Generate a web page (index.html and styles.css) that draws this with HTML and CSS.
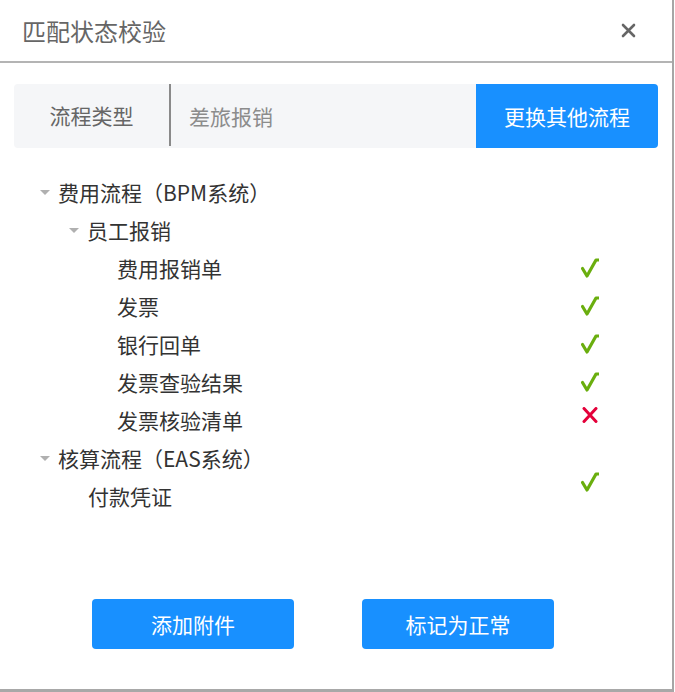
FILE: index.html
```html
<!DOCTYPE html>
<html lang="zh-CN">
<head>
<meta charset="utf-8">
<title>匹配状态校验</title>
<link rel="stylesheet" href="styles.css">
</head>
<body>
<div class="dialog">
  <div class="header">
    <span class="title">匹配状态校验</span>
    <span class="close" aria-label="关闭">
      <svg width="15" height="15" viewBox="0 0 15 15"><path d="M2 2 L13 13 M13 2 L2 13" stroke="#666" stroke-width="2.6" stroke-linecap="round"/></svg>
    </span>
  </div>
  <div class="body">
    <div class="segment">
      <div class="seg-label">流程类型</div>
      <div class="seg-value">差旅报销</div>
      <div class="seg-btn">更换其他流程</div>
    </div>
    <div class="tree">
      <div class="row l1"><span class="arrow"></span><span class="txt">费用流程（BPM系统）</span></div>
      <div class="row l2"><span class="arrow"></span><span class="txt">员工报销</span></div>
      <div class="row l3"><span class="arrow none"></span><span class="txt">费用报销单</span><span class="status"><svg class="ok" width="18" height="20" viewBox="0 0 18 20"><path d="M1.5 10.5 L6 18 L15 2 L17.5 2" /></svg></span></div>
      <div class="row l3"><span class="arrow none"></span><span class="txt">发票</span><span class="status"><svg class="ok" width="18" height="20" viewBox="0 0 18 20"><path d="M1.5 10.5 L6 18 L15 2 L17.5 2" /></svg></span></div>
      <div class="row l3"><span class="arrow none"></span><span class="txt">银行回单</span><span class="status"><svg class="ok" width="18" height="20" viewBox="0 0 18 20"><path d="M1.5 10.5 L6 18 L15 2 L17.5 2" /></svg></span></div>
      <div class="row l3"><span class="arrow none"></span><span class="txt">发票查验结果</span><span class="status"><svg class="ok" width="18" height="20" viewBox="0 0 18 20"><path d="M1.5 10.5 L6 18 L15 2 L17.5 2" /></svg></span></div>
      <div class="row l3"><span class="arrow none"></span><span class="txt">发票核验清单</span><span class="status up"><svg class="bad" width="18" height="16" viewBox="0 0 18 16"><path d="M3 1.5 L15 14.5 M15 1.5 L3 14.5" /></svg></span></div>
      <div class="row l1"><span class="arrow"></span><span class="txt">核算流程（EAS系统）</span></div>
      <div class="row l2"><span class="arrow none"></span><span class="txt">付款凭证</span><span class="status up2"><svg class="ok" width="18" height="20" viewBox="0 0 18 20"><path d="M1.5 10.5 L6 18 L15 2 L17.5 2" /></svg></span></div>
    </div>
    <div class="actions">
      <div class="btn btn-a">添加附件</div>
      <div class="btn btn-b">标记为正常</div>
    </div>
  </div>
</div>
</body>
</html>
```

FILE: styles.css
```css
* { box-sizing: border-box; }
html, body { margin: 0; padding: 0; background: #fff; }
body {
  font-family: "Noto Sans CJK SC", "Noto Sans", sans-serif;
  width: 675px;
  height: 692px;
  overflow: hidden;
}
.dialog {
  width: 674px;
  height: 692px;
  border-right: 2px solid #a6a6a6;
  border-bottom: 3px solid #a8a8a8;
  background: #fff;
  display: flex;
  flex-direction: column;
}
.header {
  height: 63px;
  border-bottom: 2px solid #b4b4b4;
  display: flex;
  align-items: center;
  justify-content: space-between;
  padding: 0 36px 0 22px;
  flex: none;
}
.title {
  font-size: 24px;
  color: #666;
  line-height: 1;
}
.close { display: flex; }
.body {
  padding: 21px 14px 0 14px;
  display: flex;
  flex-direction: column;
  flex: 1;
}
.segment {
  height: 64px;
  width: 644px;
  background: #f5f6f8;
  border-radius: 4px;
  display: flex;
  align-items: center;
}
.seg-label {
  width: 157px;
  display: flex;
  align-items: center;
  justify-content: center;
  font-size: 21px;
  color: #666;
  border-right: 2px solid #8a8a8a;
  height: 62px;
  align-self: flex-start;
}
.seg-value {
  flex: 1;
  padding-left: 18px;
  font-size: 21px;
  color: #8c8c8c;
}
.seg-btn {
  width: 182px;
  height: 64px;
  background: #1890ff;
  color: #fff;
  font-size: 21px;
  display: flex;
  align-items: center;
  justify-content: center;
  border-radius: 0 4px 4px 0;
}
.tree {
  margin: 25px -14px 0 -14px;
  display: flex;
  flex-direction: column;
}
.row {
  height: 38px;
  display: flex;
  align-items: center;
  font-size: 21px;
  color: #333;
  padding-right: 73px;
}
.row.l1 { padding-left: 40px; }
.row.l2 { padding-left: 69px; }
.row.l3 { padding-left: 99px; }
.arrow {
  width: 0;
  height: 0;
  border-left: 5.5px solid transparent;
  border-right: 5.5px solid transparent;
  border-top: 5px solid #b0b0b0;
  margin-right: 8px;
  flex: none;
}
.arrow.none { border-top-color: transparent; }
.l2 .arrow.none { margin-right: 9px; }
.txt { line-height: 1; }
.status {
  margin-left: auto;
  display: flex;
}
.status svg { display: block; }
.ok path {
  fill: none;
  stroke: #6aae0e;
  stroke-width: 3.2;
  stroke-linejoin: round;
  stroke-linecap: round;
}
.bad path {
  fill: none;
  stroke: #e4003a;
  stroke-width: 3;
  stroke-linecap: round;
}
.status.up { margin-bottom: 10px; }
.status.up2 { margin-bottom: 28px; }
.actions {
  margin-top: auto;
  margin-bottom: 40px;
  display: flex;
  gap: 68px;
  padding-left: 78px;
}
.btn {
  height: 50px;
  background: #1890ff;
  color: #fff;
  font-size: 21px;
  border-radius: 4px;
  display: flex;
  align-items: center;
  justify-content: center;
}
.btn-a { width: 202px; }
.btn-b { width: 192px; }
```
